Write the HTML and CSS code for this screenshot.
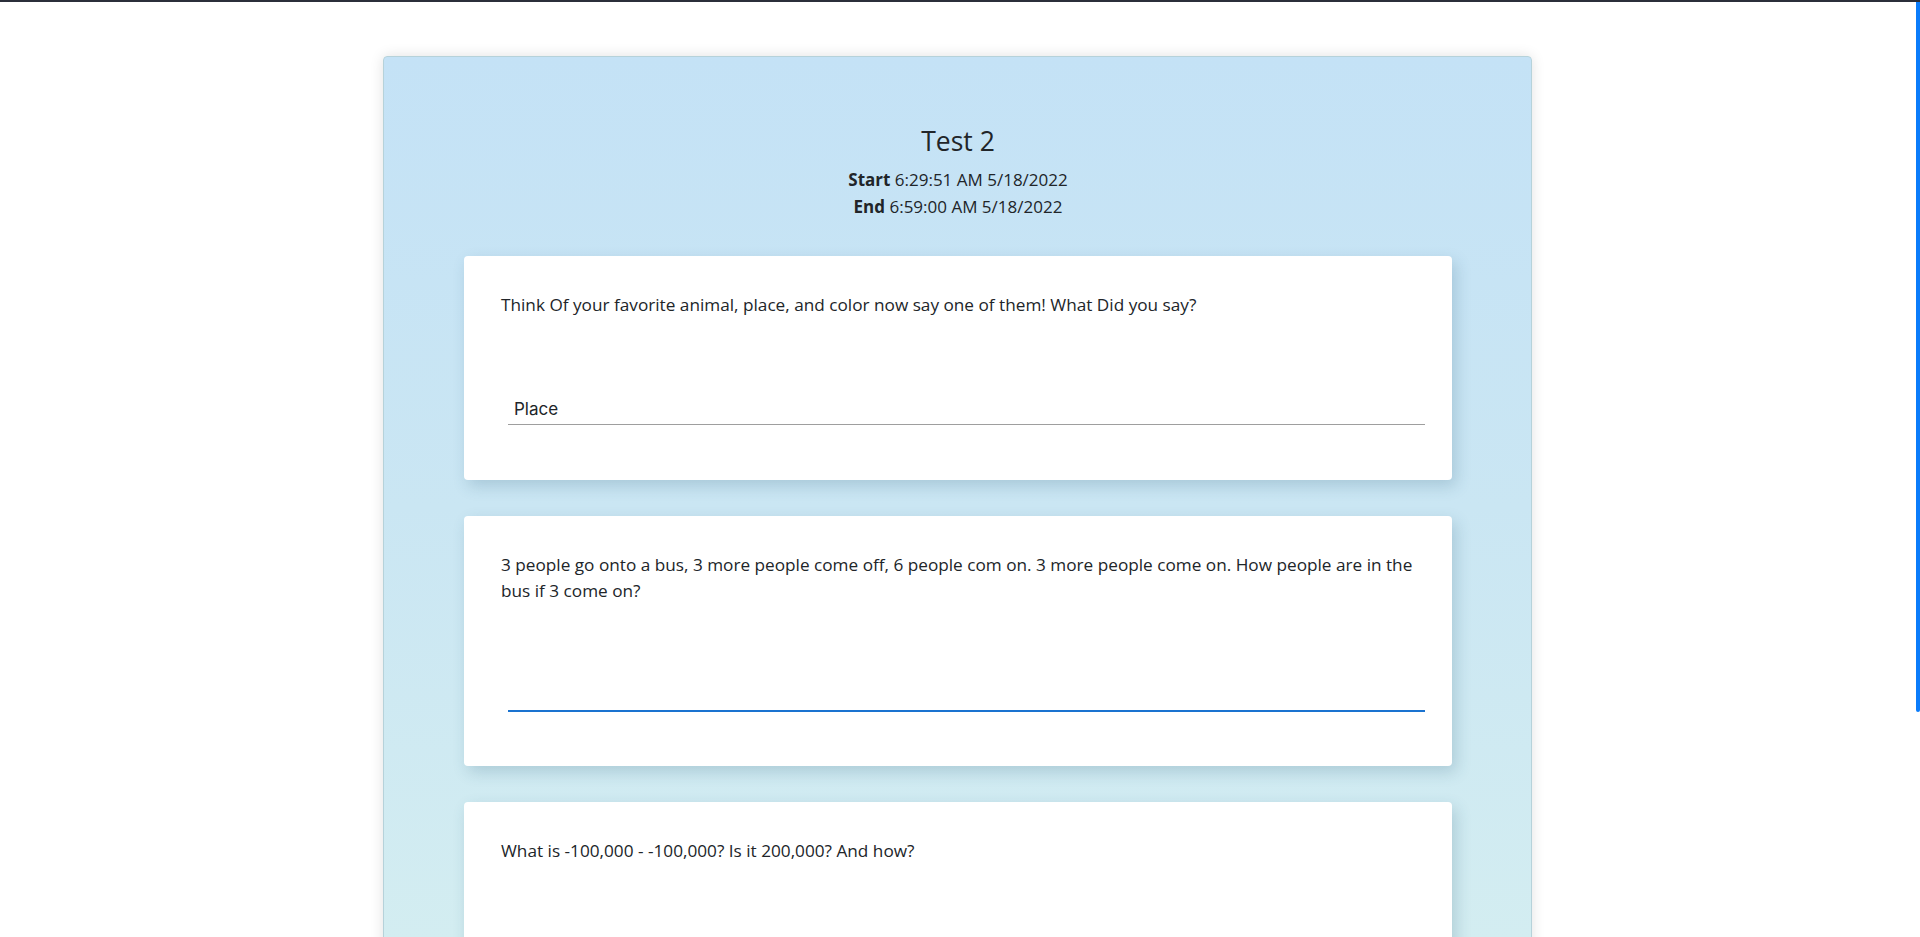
FILE: index.html
```html
<!DOCTYPE html>
<html lang="en">
<head>
<meta charset="utf-8">
<title>Test 2</title>
<link rel="stylesheet" href="styles.css">
</head>
<body>
<div class="topline"></div>
<div class="viewport">
  <main class="page">
    <section class="test">
      <header class="test-head">
        <h3 class="test-title">Test 2</h3>
        <div class="test-time"><b>Start</b> 6:29:51 AM 5/18/2022</div>
        <div class="test-time"><b>End</b> 6:59:00 AM 5/18/2022</div>
      </header>

      <div class="question">
        <p class="question-text">Think Of your favorite animal, place, and color now say one of them! What Did you say?</p>
        <div class="answer"><input class="answer-input" type="text" value="Place"></div>
      </div>

      <div class="question">
        <p class="question-text">3 people go onto a bus, 3 more people come off, 6 people com on. 3 more people come on. How people are in the bus if 3 come on?</p>
        <div class="answer"><input class="answer-input is-focused" type="text" value=""></div>
      </div>

      <div class="question">
        <p class="question-text">What is -100,000 - -100,000? Is it 200,000? And how?</p>
        <div class="answer"><input class="answer-input" type="text" value=""></div>
      </div>
    </section>
  </main>
  <div class="scrollbar"><div class="scroll-thumb"></div></div>
</div>
</body>
</html>
```
FILE: styles.css
```css
* { box-sizing: border-box; }

html, body {
  margin: 0;
  height: 100%;
}

body {
  overflow: hidden;
  background: #ffffff;
  color: #212529;
  font-family: "Segoe UI", "Open Sans", "Noto Sans", sans-serif;
  display: flex;
  flex-direction: column;
}

.topline {
  height: 2px;
  flex: 0 0 2px;
  background: #2b2f3a;
}

.viewport {
  flex: 1;
  display: flex;
  min-height: 0;
}

.page {
  flex: 1;
  min-width: 0;
  overflow: hidden;
  padding-top: 54px;
}

.scrollbar {
  width: 5px;
  flex: 0 0 5px;
  display: flex;
  justify-content: flex-end;
}

.scroll-thumb {
  width: 4px;
  height: 710px;
  background: #0a7cfb;
  border-radius: 0 0 2px 2px;
}

.test {
  width: 60%;
  margin: 0 auto;
  min-height: 1300px;
  border: 1px solid #b6d2da;
  border-radius: 4px;
  background: linear-gradient(180deg, #c4e2f6 0px, #cae6f3 450px, #d3edf1 880px, #d6f0f0 1300px);
  box-shadow: 0 0 14px rgba(0, 0, 0, 0.12);
  padding: 69px 79px 40px 80px;
}

.test-head {
  text-align: center;
  margin-bottom: 36px;
}

.test-title {
  margin: 0 0 8px;
  font-size: 26.5px;
  font-weight: 500;
  line-height: 1.2;
}

.test-time {
  font-size: 17px;
  line-height: 27px;
}

.test-time b {
  font-weight: 700;
}

.question {
  background: #ffffff;
  border-radius: 4px;
  box-shadow: 4px 6px 16px rgba(30, 80, 110, 0.2);
  padding: 36px 27px 55px 37px;
  margin-bottom: 36px;
}

.question-text {
  margin: 0;
  font-size: 17.2px;
  line-height: 26px;
}

.answer {
  margin: 81px 0 0 7px;
}

.answer-input {
  display: block;
  width: 100%;
  border: 0;
  border-bottom: 1px solid #9e9e9e;
  outline: none;
  background: transparent;
  font-family: Inter, "Open Sans", sans-serif;
  font-size: 17px;
  line-height: 20px;
  height: 26px;
  padding: 0 0 5px 6px;
  color: #212529;
}

.answer-input.is-focused {
  border-bottom-color: #1a73d0;
  box-shadow: 0 1px 0 #1a73d0;
}
```
